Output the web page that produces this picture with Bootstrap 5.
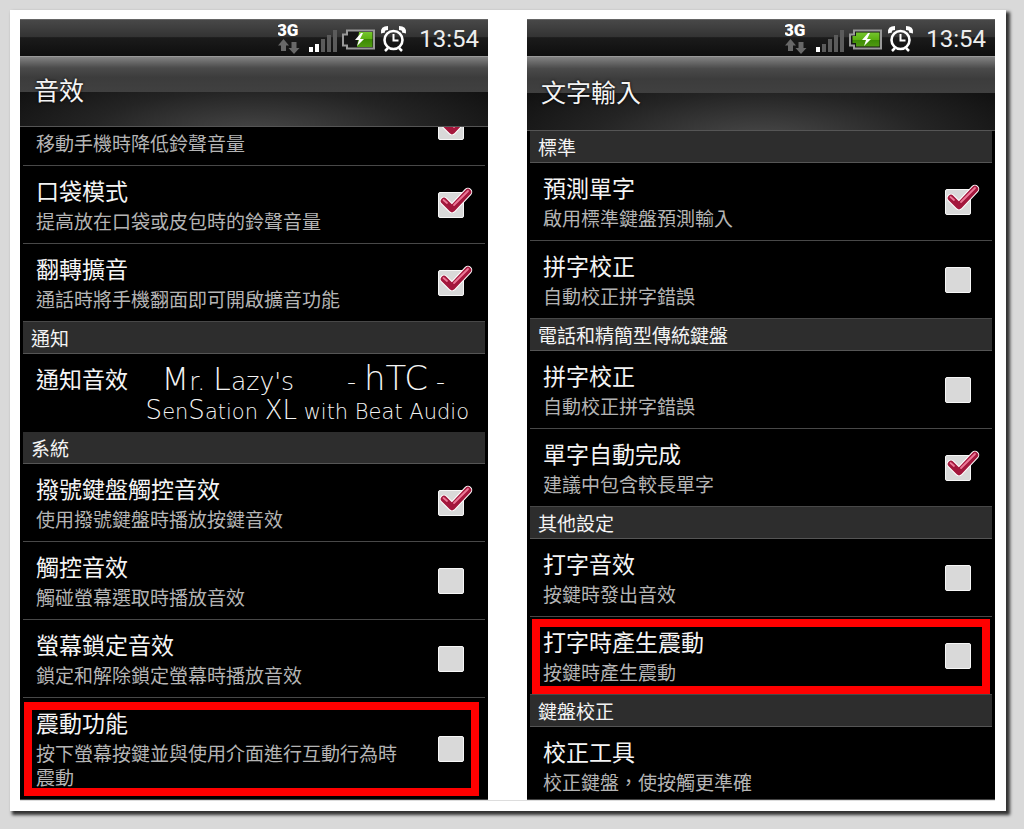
<!DOCTYPE html>
<html lang="zh-Hant">
<head>
<meta charset="utf-8">
<meta name="viewport" content="width=device-width, initial-scale=1">
<title>音效與文字輸入設定</title>
<link href="https://cdn.jsdelivr.net/npm/bootstrap@5.3.0/dist/css/bootstrap.min.css" rel="stylesheet">
<style>
body{background:#d9d9d9;font-family:"Noto Sans CJK TC","Noto Sans",sans-serif;padding:10px 18px 18px 10px}
.sheet{background:#fff;padding:9px 11px 10px 10px;box-shadow:3px 3px 3px 1px #333}
.pair{gap:39px;border-bottom:1px solid #ddd}
.phone{flex:1 1 0;min-width:0;background:#000;border-bottom:1px solid #444;color:#f4f4f4}
.statusbar{height:37px;padding-right:9px;border-top:1px solid #666;
  background:linear-gradient(#484848,#333 47%,#1b1b1b 49%,#0e0e0e)}
.clock{font:400 24px/38px Roboto,sans-serif;color:#eee}
.titlebar{height:71px;padding:0 14px 5px;border-top:1px solid #999;border-bottom:1px solid #555;
  background:linear-gradient(#828282,#4a4a4a 16%,#3c3c3c 30%,#404040 50%,transparent 50%),
  radial-gradient(ellipse 60% 110% at 50% 115%,#4a4a4a,#242424 60%,#121212)}
.titlebar.tall{height:75px}
.titlebar h1{font-size:25px;line-height:36px;font-weight:400;text-shadow:0 0 3px #000}
.prefs{padding:0 3px}
.section-head{height:32px;padding:0 8px;background:#2d2d2d;border-bottom:1px solid #555;
  font-size:19px;line-height:31px;font-weight:400}
.pref{position:relative;padding:10px 21px 10px 13px;color:#f4f4f4;text-decoration:none}
.pref.ruled{border-bottom:1px solid #484848}
.pref.tail{height:39px;overflow:hidden}
.pref.tail .tick{margin-bottom:15px}
.name{font-size:23px;line-height:29px}
.note{font-size:19px;line-height:24px;margin-top:4px;color:#b4b4b4}
.tick{appearance:none;position:relative;flex:none;width:26px;height:26px;background:#d9d9d9;border:1px solid #f6f6f6;border-radius:2px}
.tick:checked::after{content:"";position:absolute;left:0;top:-6px;width:36px;height:30px;
  background:url("data:image/svg+xml,%3Csvg xmlns='http://www.w3.org/2000/svg' viewBox='0 0 36 30' fill='none' stroke-linecap='round' stroke-linejoin='round'%3E%3Cpath d='M5 14L13 22L29 5' stroke='%23fff' stroke-width='8.500'/%3E%3Cpath d='M5 14L13 22L29 5' stroke='%23a3173c' stroke-width='6.5'/%3E%3Cpath d='M4.500 13L8 16M15 18L29 4' stroke='%23ec7a98' stroke-width='1.800'/%3E%3C/svg%3E") no-repeat}
.marked::after{content:"";position:absolute;inset:2px 2px 0 2px;border:8px solid #f00;pointer-events:none}
.marked.long::after{inset:4px 6px 3px 1px}
.tone{height:78px;padding:10px 16px 0 13px}
.script{font-family:"DejaVu Sans",sans-serif;font-weight:200;font-size:21px;line-height:29px;white-space:nowrap}
.script .l1{font-size:25px}
.script .cap{font-size:32px}
.script .htc{font-size:34px}
.script .mid{font-size:26px}
</style>
</head>
<body>
<svg width="0" height="0" class="position-absolute" aria-hidden="true"><defs>
<linearGradient id="juice" x2="0" y2="1"><stop stop-color="#75c52e"/><stop offset=".5" stop-color="#5cb010"/><stop offset=".5" stop-color="#3c8a04"/><stop offset="1" stop-color="#4f9a10"/></linearGradient>
<g id="net"><text x="-1" y="16" font-family="Roboto" font-weight="900" font-size="17" fill="#fff">3G</text>
<path d="M5.500 19L11 25.500H8V31H3V25.500H0Z" fill="#686868"/><path d="M13.500 22h5v6h3L16 34l-5.500-6h3Z" fill="#686868"/></g>
<g id="bars" fill="#5b5b5b"><path d="M37 24h4v8h-4zM43 19h4v13h-4zM49 15h4v17h-4zM55 10h4v22h-4z"/></g>
<path id="shell" d="M69 10.500H96V28.500H69V25.500H65V14.500H69Z" fill="#151515" stroke="#999" stroke-width="2"/>
<path id="bolt" d="M83 13l-6 7h4l-2 6 7-7h-4l3-6z" fill="#fff"/>
<g id="alarm" fill="none" stroke="#fff"><circle cx="115.500" cy="20" r="9" stroke-width="2.600"/><path d="M115.500 14v6.500h5" stroke-width="2"/><path d="M110 28l-3 3M121 28l3 3" stroke-width="2.500"/><path d="M105 13q-1-5 5-5M126 13q1-5-5-5" stroke-width="4"/></g>
</defs></svg>

<main class="sheet">
<div class="pair d-flex">

<section class="phone">
  <div class="statusbar d-flex justify-content-end">
    <svg width="141" height="36" viewBox="0 0 141 36" aria-label="3G">
      <use href="#net"/><use href="#bars"/><path d="M31 27h4v5h-4zM37 24h4v8h-4z" fill="#fff"/>
      <use href="#shell"/><path d="M81 12h13.500v15H79z" fill="url(#juice)"/><use href="#bolt"/><use href="#alarm"/>
    </svg>
    <span class="clock">13:54</span>
  </div>
  <header class="titlebar d-flex align-items-center"><h1 class="m-0">音效</h1></header>
  <div class="prefs">
    <label class="pref tail ruled d-flex align-items-end justify-content-between"><span class="note">移動手機時降低鈴聲音量</span><input type="checkbox" class="tick" checked></label>
    <label class="pref ruled d-flex align-items-center justify-content-between"><span><span class="name d-block">口袋模式</span><span class="note d-block">提高放在口袋或皮包時的鈴聲音量</span></span><input type="checkbox" class="tick" checked></label>
    <label class="pref ruled d-flex align-items-center justify-content-between"><span><span class="name d-block">翻轉擴音</span><span class="note d-block">通話時將手機翻面即可開啟擴音功能</span></span><input type="checkbox" class="tick" checked></label>
    <h2 class="section-head m-0">通知</h2>
    <a href="#" class="pref tone d-flex justify-content-between">
      <span class="name">通知音效</span>
      <span class="script"><span class="d-flex align-items-baseline justify-content-between ps-3 pe-4"><span class="l1"><span class="cap">M</span>r. <span class="cap">L</span>azy's</span><span class="l1">- <span class="htc">hTC</span> -</span></span><span class="d-block"><span class="mid">S</span>en<span class="mid">S</span>ation <span class="mid">XL</span> with Beat Audio</span></span>
    </a>
    <h2 class="section-head m-0">系統</h2>
    <label class="pref ruled d-flex align-items-center justify-content-between"><span><span class="name d-block">撥號鍵盤觸控音效</span><span class="note d-block">使用撥號鍵盤時播放按鍵音效</span></span><input type="checkbox" class="tick" checked></label>
    <label class="pref ruled d-flex align-items-center justify-content-between"><span><span class="name d-block">觸控音效</span><span class="note d-block">觸碰螢幕選取時播放音效</span></span><input type="checkbox" class="tick"></label>
    <label class="pref ruled d-flex align-items-center justify-content-between"><span><span class="name d-block">螢幕鎖定音效</span><span class="note d-block">鎖定和解除鎖定螢幕時播放音效</span></span><input type="checkbox" class="tick"></label>
    <label class="pref marked long d-flex align-items-center justify-content-between"><span class="pe-4"><span class="name d-block">震動功能</span><span class="note d-block">按下螢幕按鍵並與使用介面進行互動行為時震動</span></span><input type="checkbox" class="tick"></label>
  </div>
</section>

<section class="phone">
  <div class="statusbar d-flex justify-content-end">
    <svg width="141" height="36" viewBox="0 0 141 36" aria-label="3G">
      <use href="#net"/><use href="#bars"/><path d="M31 27h4v5h-4z" fill="#fff"/>
      <use href="#shell"/><path d="M71 12.500H94.500V26.500H71V23H67.500V16H71Z" fill="url(#juice)"/><use href="#bolt"/><use href="#alarm"/>
    </svg>
    <span class="clock">13:54</span>
  </div>
  <header class="titlebar tall d-flex align-items-center"><h1 class="m-0">文字輸入</h1></header>
  <div class="prefs">
    <h2 class="section-head m-0">標準</h2>
    <label class="pref ruled d-flex align-items-center justify-content-between"><span><span class="name d-block">預測單字</span><span class="note d-block">啟用標準鍵盤預測輸入</span></span><input type="checkbox" class="tick" checked></label>
    <label class="pref ruled d-flex align-items-center justify-content-between"><span><span class="name d-block">拼字校正</span><span class="note d-block">自動校正拼字錯誤</span></span><input type="checkbox" class="tick"></label>
    <h2 class="section-head m-0">電話和精簡型傳統鍵盤</h2>
    <label class="pref ruled d-flex align-items-center justify-content-between"><span><span class="name d-block">拼字校正</span><span class="note d-block">自動校正拼字錯誤</span></span><input type="checkbox" class="tick"></label>
    <label class="pref ruled d-flex align-items-center justify-content-between"><span><span class="name d-block">單字自動完成</span><span class="note d-block">建議中包含較長單字</span></span><input type="checkbox" class="tick" checked></label>
    <h2 class="section-head m-0">其他設定</h2>
    <label class="pref ruled d-flex align-items-center justify-content-between"><span><span class="name d-block">打字音效</span><span class="note d-block">按鍵時發出音效</span></span><input type="checkbox" class="tick"></label>
    <label class="pref ruled marked d-flex align-items-center justify-content-between"><span><span class="name d-block">打字時產生震動</span><span class="note d-block">按鍵時產生震動</span></span><input type="checkbox" class="tick"></label>
    <h2 class="section-head m-0">鍵盤校正</h2>
    <a href="#" class="pref d-block pb-0"><span class="name d-block">校正工具</span><span class="note d-block">校正鍵盤，使按觸更準確</span></a>
  </div>
</section>

</div>
</main>
<script src="https://cdn.jsdelivr.net/npm/bootstrap@5.3.0/dist/js/bootstrap.bundle.min.js"></script>
</body>
</html>
